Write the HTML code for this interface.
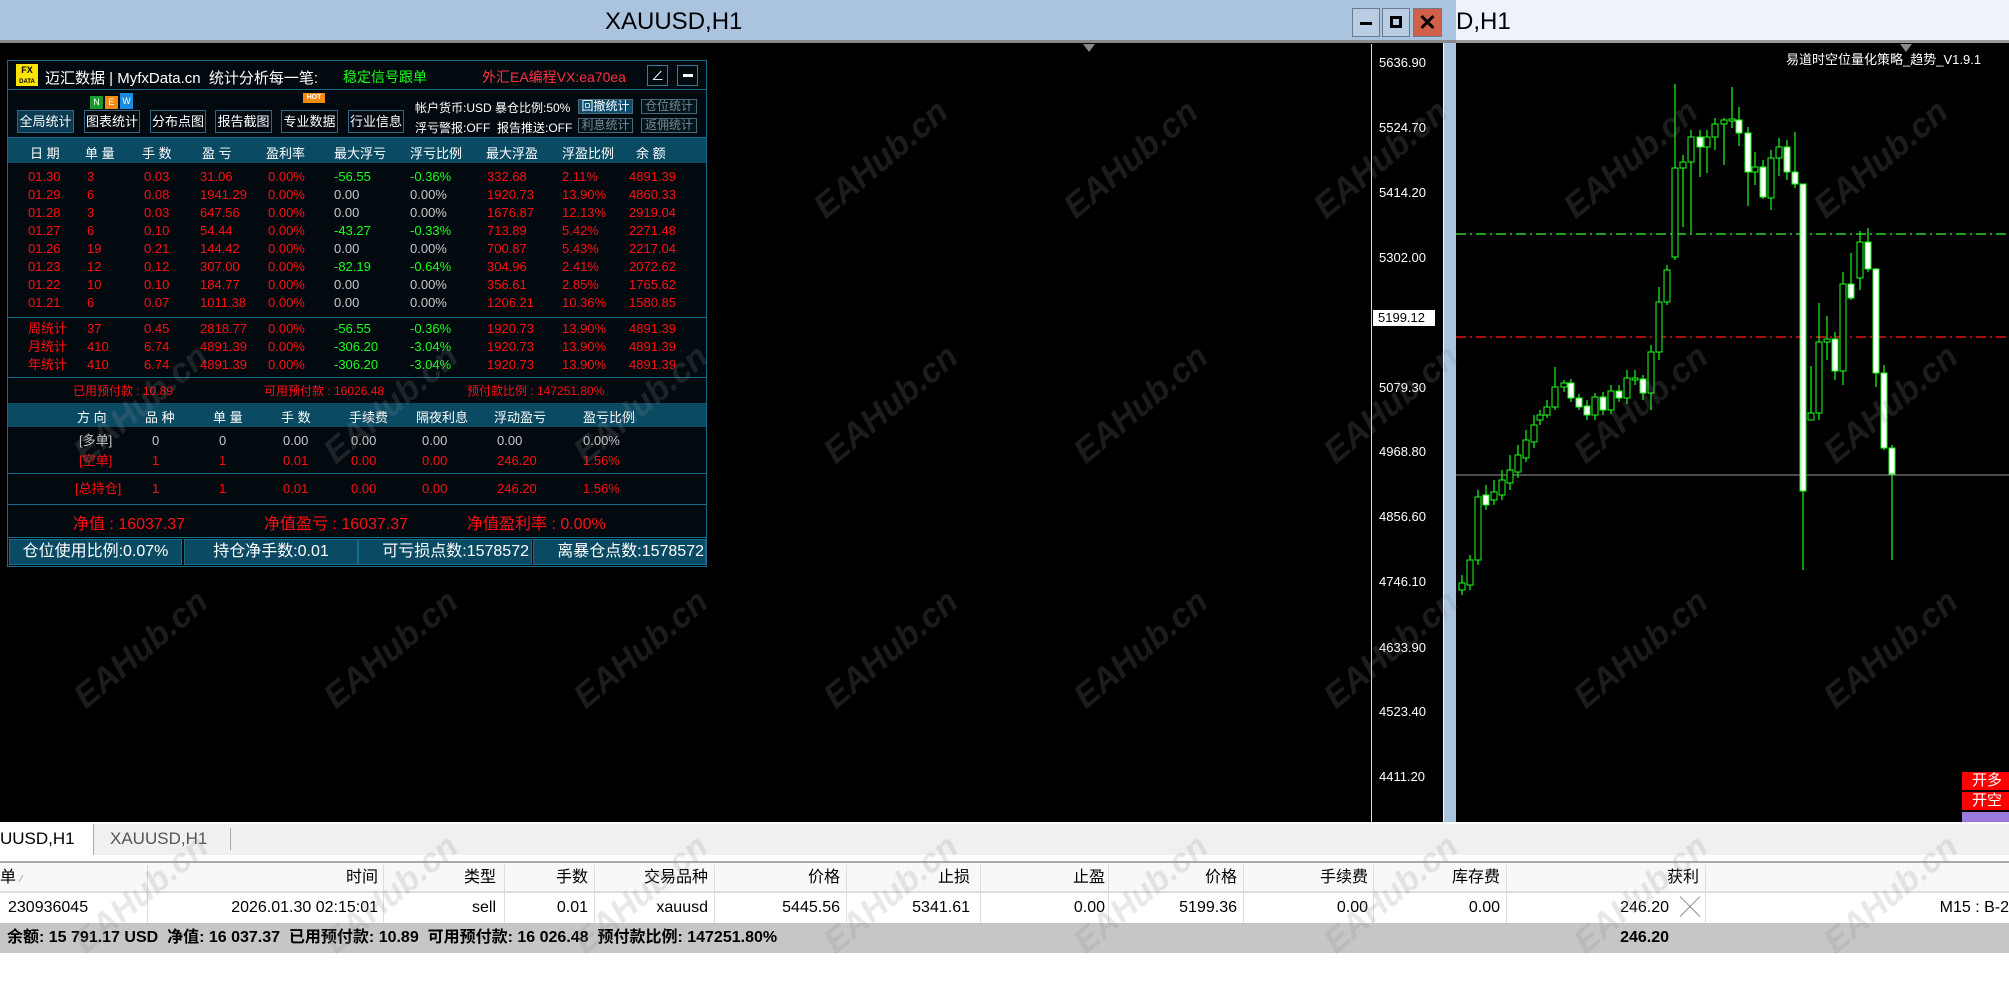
<!DOCTYPE html>
<html><head><meta charset="utf-8">
<style>
*{margin:0;padding:0;box-sizing:border-box}
body{width:2009px;height:981px;overflow:hidden;background:#fff;position:relative;font-family:"Liberation Sans","Noto Sans CJK SC",sans-serif}
.a{position:absolute;white-space:nowrap}
.p{font-size:13px;line-height:16px}
.r{color:#ff1010}.g{color:#1aff1a}.w{color:#fff}.gr{color:#c8c8c8}
.btn{position:absolute;border:1px solid #2a6a88;background:#020a10;color:#fff;font-size:13px;line-height:21px;text-align:center;overflow:hidden}
.sb{position:absolute;border:1px solid #4a6a7a;color:#7a8a94;font-size:12px;line-height:13px;text-align:center;background:#04141c;overflow:hidden}
.hd{color:#fff;font-size:13px}
.pr{position:absolute;left:1379px;color:#fff;font-size:13px;line-height:14px}
.th{position:absolute;top:863px;height:30px;font-size:16px;line-height:30px;color:#000;text-align:right}
.td{position:absolute;top:893px;height:30px;font-size:16px;line-height:30px;color:#000;text-align:right}
.wm{position:absolute;font-size:34px;font-weight:bold;font-style:italic;color:rgba(140,140,140,0.2);transform:rotate(-40deg);white-space:nowrap}
</style></head><body>
<div class="a" style="left:0;top:0;width:1456px;height:40px;background:#aac3de"></div>
<div class="a" style="left:0;top:40px;width:1456px;height:3px;background:#8a8a8a"></div>
<div class="a" style="left:1456px;top:0;width:553px;height:40px;background:#eef3fb"></div>
<div class="a" style="left:1456px;top:40px;width:553px;height:3px;background:#9a9a9a"></div>
<div class="a" style="left:605px;top:8px;font-size:24px;color:#000">XAUUSD,H1</div>
<div class="a" style="left:1456px;top:8px;font-size:24px;color:#000">D,H1</div>
<div class="a" style="left:1352px;top:8px;width:28px;height:29px;border:1px solid #6a7a8a;background:#b8cce4"><div class="a" style="left:7px;top:13px;width:12px;height:3px;background:#000"></div></div>
<div class="a" style="left:1382px;top:8px;width:28px;height:29px;border:1px solid #6a7a8a;background:#b8cce4"><div class="a" style="left:7px;top:7px;width:12px;height:12px;border:3px solid #000"></div></div>
<div class="a" style="left:1413px;top:8px;width:29px;height:29px;border:1px solid #6a7a8a;background:#d0604a;color:#000;font-size:22px;font-weight:bold;text-align:center;line-height:28px">✕</div>
<div class="a" style="left:0;top:43px;width:1444px;height:779px;background:#000"></div>
<div class="a" style="left:1371px;top:44px;width:1px;height:778px;background:#ddd"></div>
<div class="a" style="left:1443px;top:43px;width:13px;height:779px;background:#aac3de;border-left:1px solid #fff"></div>
<div class="a" style="left:1456px;top:43px;width:553px;height:779px;background:#000"></div>
<div class="a" style="left:1083px;top:44px;width:0;height:0;border-left:6px solid transparent;border-right:6px solid transparent;border-top:8px solid #888"></div>
<div class="a" style="left:1900px;top:44px;width:0;height:0;border-left:6px solid transparent;border-right:6px solid transparent;border-top:8px solid #888"></div>
<div class="pr" style="top:56px">5636.90</div>
<div class="pr" style="top:121px">5524.70</div>
<div class="pr" style="top:186px">5414.20</div>
<div class="pr" style="top:251px">5302.00</div>
<div class="a" style="left:1373px;top:310px;width:62px;height:16px;background:#fff;color:#000;font-size:13px;line-height:16px;padding-left:5px">5199.12</div>
<div class="pr" style="top:381px">5079.30</div>
<div class="pr" style="top:445px">4968.80</div>
<div class="pr" style="top:510px">4856.60</div>
<div class="pr" style="top:575px">4746.10</div>
<div class="pr" style="top:641px">4633.90</div>
<div class="pr" style="top:705px">4523.40</div>
<div class="pr" style="top:770px">4411.20</div>
<div class="a" style="left:1786px;top:49px;color:#fff;font-size:13px">易道时空位量化策略_趋势_V1.9.1</div>
<svg class="a" style="left:0;top:0" width="2009" height="822" id="cs">
<line x1="1456" y1="234" x2="2009" y2="234" stroke="#2ad42a" stroke-width="1.5" stroke-dasharray="10,4,2,4"/>
<line x1="1456" y1="337" x2="2009" y2="337" stroke="#e01010" stroke-width="1.5" stroke-dasharray="10,4,2,4"/>
<line x1="1456" y1="475" x2="2009" y2="475" stroke="#999" stroke-width="1"/>
</svg>
<div class="a" style="left:1962px;top:772px;width:47px;height:18px;background:#f00;color:#fff;font-size:15px;line-height:18px;padding-left:10px">开多</div>
<div class="a" style="left:1962px;top:792px;width:47px;height:18px;background:#f00;color:#fff;font-size:15px;line-height:18px;padding-left:10px">开空</div>
<div class="a" style="left:1962px;top:812px;width:47px;height:10px;background:#9a7ae0;overflow:hidden"></div>
<div class="a" style="left:7px;top:60px;width:700px;height:507px;background:#020a10;border:1px solid #1a6a8a"></div>
<div class="a" style="left:7px;top:89px;width:700px;height:1px;background:#1a6a8a"></div>
<div class="a" style="left:16px;top:64px;width:22px;height:22px;background:#ffe400;color:#000;font-size:9px;font-weight:bold;line-height:10px;text-align:center;padding-top:1px">FX<br><span style="font-size:6px">DATA</span></div>
<div class="a w" style="left:45px;top:67px;font-size:15px">迈汇数据 | MyfxData.cn &nbsp;统计分析每一笔:</div>
<div class="a g" style="left:343px;top:67px;font-size:14px">稳定信号跟单</div>
<div class="a r" style="left:482px;top:67px;font-size:14px;color:#ff3040">外汇EA编程VX:ea70ea</div>
<div class="a" style="left:647px;top:65px;width:21px;height:21px;border:1px solid #3a7a9a;color:#fff;font-size:13px;text-align:center;line-height:19px">∠</div>
<div class="a" style="left:677px;top:65px;width:21px;height:21px;border:1px solid #3a7a9a"><div class="a" style="left:5px;top:8px;width:10px;height:3px;background:#fff"></div></div>
<div class="btn" style="left:17px;top:110px;width:57px;height:23px;background:#0a3b52">全局统计</div>
<div class="btn" style="left:84px;top:110px;width:56px;height:23px">图表统计</div>
<div class="btn" style="left:150px;top:110px;width:56px;height:23px">分布点图</div>
<div class="btn" style="left:215px;top:110px;width:57px;height:23px">报告截图</div>
<div class="btn" style="left:281px;top:110px;width:57px;height:23px">专业数据</div>
<div class="btn" style="left:348px;top:110px;width:56px;height:23px">行业信息</div>
<div class="a" style="left:90px;top:96px;width:13px;height:13px;background:#1a9a2a;color:#fff;font-size:9px;text-align:center;line-height:13px">N</div>
<div class="a" style="left:105px;top:96px;width:13px;height:13px;background:#f08a10;color:#fff;font-size:9px;text-align:center;line-height:13px">E</div>
<div class="a" style="left:120px;top:93px;width:13px;height:16px;background:#1a8ae0;color:#fff;font-size:9px;text-align:center;line-height:16px">W</div>
<div class="a" style="left:303px;top:93px;width:22px;height:10px;background:#f08a10;color:#fff;font-size:7px;text-align:center;line-height:10px;font-weight:bold">HOT</div>
<div class="a w" style="left:415px;top:99px;font-size:12px">帐户货币:USD 暴仓比例:50%</div>
<div class="a w" style="left:415px;top:119px;font-size:12px">浮亏警报:OFF &nbsp;报告推送:OFF</div>
<div class="sb" style="left:578px;top:99px;width:55px;height:15px;background:#0d4e6e;color:#fff">回撤统计</div>
<div class="sb" style="left:641px;top:99px;width:56px;height:15px">仓位统计</div>
<div class="sb" style="left:578px;top:118px;width:55px;height:15px">利息统计</div>
<div class="sb" style="left:641px;top:118px;width:56px;height:15px">返佣统计</div>
<div class="a" style="left:8px;top:137px;width:698px;height:26px;background:#0a4a63;border-top:1px solid #1a6a8a"></div>
<div class="a hd" style="left:30px;top:143px">日 期</div><div class="a hd" style="left:85px;top:143px">单 量</div><div class="a hd" style="left:142px;top:143px">手 数</div><div class="a hd" style="left:202px;top:143px">盈 亏</div><div class="a hd" style="left:266px;top:143px">盈利率</div><div class="a hd" style="left:334px;top:143px">最大浮亏</div><div class="a hd" style="left:410px;top:143px">浮亏比例</div><div class="a hd" style="left:486px;top:143px">最大浮盈</div><div class="a hd" style="left:562px;top:143px">浮盈比例</div><div class="a hd" style="left:636px;top:143px">余 额</div>
<div id="rows"></div>
<div class="a" style="left:8px;top:317px;width:698px;height:1px;background:#1a6a8a"></div>
<div class="a" style="left:8px;top:377px;width:698px;height:1px;background:#1a6a8a"></div>
<div class="a r p" style="left:73px;top:383px;font-size:12px">已用预付款 : 10.89</div>
<div class="a r p" style="left:264px;top:383px;font-size:12px">可用预付款 : 16026.48</div>
<div class="a r p" style="left:467px;top:383px;font-size:12px">预付款比例 : 147251.80%</div>
<div class="a" style="left:8px;top:403px;width:698px;height:24px;background:#0a4a63"></div>
<div class="a hd" style="left:77px;top:407px">方 向</div><div class="a hd" style="left:145px;top:407px">品 种</div><div class="a hd" style="left:213px;top:407px">单 量</div><div class="a hd" style="left:281px;top:407px">手 数</div><div class="a hd" style="left:349px;top:407px">手续费</div><div class="a hd" style="left:416px;top:407px">隔夜利息</div><div class="a hd" style="left:494px;top:407px">浮动盈亏</div><div class="a hd" style="left:583px;top:407px">盈亏比例</div>
<div id="rows2"></div>
<div class="a" style="left:8px;top:473px;width:698px;height:1px;background:#1a6a8a"></div>
<div class="a" style="left:8px;top:504px;width:698px;height:1px;background:#1a6a8a"></div>
<div class="a r" style="left:73px;top:510px;font-size:16px">净值 : 16037.37</div>
<div class="a r" style="left:264px;top:510px;font-size:16px">净值盈亏 : 16037.37</div>
<div class="a r" style="left:467px;top:510px;font-size:16px">净值盈利率 : 0.00%</div>
<div class="a" style="left:8px;top:537px;width:698px;height:1px;background:#1a6a8a"></div>
<div class="a" style="left:9px;top:539px;width:173px;height:26px;background:#0a4a63;border:1px solid #1a6a8a;color:#fff;font-size:16px;line-height:24px;text-align:center">仓位使用比例:0.07%</div>
<div class="a" style="left:184px;top:539px;width:174px;height:26px;background:#0a4a63;border:1px solid #1a6a8a;color:#fff;font-size:16px;line-height:24px;text-align:center">持仓净手数:0.01</div>
<div class="a" style="left:358px;top:539px;width:174px;height:26px;background:#0a4a63;border:1px solid #1a6a8a;color:#fff;font-size:16px;line-height:24px;text-align:right;padding-right:2px">可亏损点数:1578572</div>
<div class="a" style="left:533px;top:539px;width:173px;height:26px;background:#0a4a63;border:1px solid #1a6a8a;color:#fff;font-size:16px;line-height:24px;text-align:right;padding-right:1px">离暴仓点数:1578572</div>
<div class="a" style="left:0;top:822px;width:2009px;height:33px;background:#f0f0f0;border-top:2px solid #fff"></div>
<div class="a" style="left:0;top:824px;width:94px;height:31px;background:#fff;border-right:1px solid #aaa;font-size:17px;line-height:30px;color:#000">UUSD,H1</div>
<div class="a" style="left:110px;top:824px;font-size:17px;line-height:30px;color:#555">XAUUSD,H1</div>
<div class="a" style="left:230px;top:828px;width:1px;height:22px;background:#aaa"></div>
<div class="a" style="left:0;top:855px;width:2009px;height:8px;background:#fff;border-bottom:2px solid #aaa"></div>
<div class="a" style="left:0;top:863px;width:2009px;height:30px;background:#f8f8f8;border-bottom:2px solid #ddd"></div>
<div class="a" style="left:0;top:893px;width:2009px;height:30px;background:#fff"></div>
<div class="a" style="left:0;top:923px;width:2009px;height:30px;background:#c6c6c6"></div>
<div class="th" style="left:0;text-align:left">单 <span style="font-size:10px;color:#888">⁄</span></div>
<div class="th" style="left:0;width:378px">时间</div><div class="th" style="left:0;width:496px">类型</div><div class="th" style="left:0;width:588px">手数</div><div class="th" style="left:0;width:708px">交易品种</div><div class="th" style="left:0;width:840px">价格</div><div class="th" style="left:0;width:970px">止损</div><div class="th" style="left:0;width:1105px">止盈</div><div class="th" style="left:0;width:1237px">价格</div><div class="th" style="left:0;width:1368px">手续费</div><div class="th" style="left:0;width:1500px">库存费</div><div class="th" style="left:0;width:1699px">获利</div>
<div class="td" style="left:8px;text-align:left">230936045</div>
<div class="td" style="left:0;width:378px">2026.01.30 02:15:01</div><div class="td" style="left:0;width:496px">sell</div><div class="td" style="left:0;width:588px">0.01</div><div class="td" style="left:0;width:708px">xauusd</div><div class="td" style="left:0;width:840px">5445.56</div><div class="td" style="left:0;width:970px">5341.61</div><div class="td" style="left:0;width:1105px">0.00</div><div class="td" style="left:0;width:1237px">5199.36</div><div class="td" style="left:0;width:1368px">0.00</div><div class="td" style="left:0;width:1500px">0.00</div><div class="td" style="left:0;width:1669px">246.20</div>
<div class="td" style="left:1680px;color:#777;font-size:20px;text-align:left">╳</div>
<div class="td" style="left:1700px;width:309px;text-align:right">M15 : B-2</div>
<div id="seps"></div>
<div class="a" style="left:7px;top:923px;font-size:16px;line-height:30px;font-weight:bold;color:#000">余额: 15 791.17 USD &nbsp;净值: 16 037.37 &nbsp;已用预付款: 10.89 &nbsp;可用预付款: 16 026.48 &nbsp;预付款比例: 147251.80%</div>
<div class="a" style="left:1500px;top:923px;width:169px;text-align:right;font-size:16px;line-height:30px;font-weight:bold;color:#000">246.20</div>
<div id="wms"></div>
<script>
var R=[["01.30","3","0.03","31.06","0.00%","-56.55","-0.36%","332.68","2.11%","4891.39"],
["01.29","6","0.08","1941.29","0.00%","0.00","0.00%","1920.73","13.90%","4860.33"],
["01.28","3","0.03","647.56","0.00%","0.00","0.00%","1676.87","12.13%","2919.04"],
["01.27","6","0.10","54.44","0.00%","-43.27","-0.33%","713.89","5.42%","2271.48"],
["01.26","19","0.21","144.42","0.00%","0.00","0.00%","700.87","5.43%","2217.04"],
["01.23","12","0.12","307.00","0.00%","-82.19","-0.64%","304.96","2.41%","2072.62"],
["01.22","10","0.10","184.77","0.00%","0.00","0.00%","356.61","2.85%","1765.62"],
["01.21","6","0.07","1011.38","0.00%","0.00","0.00%","1206.21","10.36%","1580.85"]];
var S=[["周统计","37","0.45","2818.77","0.00%","-56.55","-0.36%","1920.73","13.90%","4891.39"],
["月统计","410","6.74","4891.39","0.00%","-306.20","-3.04%","1920.73","13.90%","4891.39"],
["年统计","410","6.74","4891.39","0.00%","-306.20","-3.04%","1920.73","13.90%","4891.39"]];
var X=[28,87,144,200,268,334,410,487,562,629],h="";
function row(d,y){for(var i=0;i<10;i++){var c="r";if(i==5||i==6){c=d[i].charAt(0)=="-"?"g":"gr";}h+='<div class="a p '+c+'" style="left:'+X[i]+'px;top:'+y+'px">'+d[i]+'</div>';}}
R.forEach(function(d,k){row(d,169+k*18)});S.forEach(function(d,k){row(d,321+k*18)});
document.getElementById("rows").innerHTML=h;
var X2=[79,152,219,283,351,422,497,583],h2="";
[[["[多单]","0","0","0.00","0.00","0.00","0.00","0.00%"],433,"gr"],[["[空单]","1","1","0.01","0.00","0.00","246.20","1.56%"],453,"r"],[["[总持仓]","1","1","0.01","0.00","0.00","246.20","1.56%"],481,"r"]].forEach(function(q){for(var i=0;i<8;i++)h2+='<div class="a p '+q[2]+'" style="left:'+(X2[i]-(i==0&&q[0][0].length>4?4:0))+'px;top:'+q[1]+'px">'+q[0][i]+'</div>';});
document.getElementById("rows2").innerHTML=h2;
var sp=[147,383,504,594,714,846,980,1108,1243,1373,1506,1705],h3="";
sp.forEach(function(x){h3+='<div class="a" style="left:'+x+'px;top:865px;width:1px;height:58px;background:#ddd"></div>';});
document.getElementById("seps").innerHTML=h3;
var C=[[1462,583,590,575,595,0],[1470,560,585,555,590,0],[1478,497,560,490,565,0],[1486,495,505,485,510,1],[1494,492,500,480,505,0],[1502,480,495,470,500,0],[1510,470,483,455,490,0],[1518,455,472,445,478,0],[1526,440,458,430,462,0],[1534,425,442,415,448,0],
[1540,415,420,410,425,0],[1547,407,415,400,418,0],[1555,387,407,367,410,0],[1564,383,387,380,392,0],[1571,383,398,379,402,1],[1579,398,407,394,410,1],[1587,406,415,400,420,1],[1595,397,415,393,420,0],[1603,397,410,392,415,1],[1611,391,410,385,414,0],[1619,391,398,385,402,1],[1627,378,398,370,404,0],[1635,378,380,370,385,0],[1643,379,393,375,400,1],[1651,352,393,345,410,0],[1659,302,352,287,360,0],[1667,270,302,265,305,0],[1675,168,257,84,260,0],[1683,162,168,155,227,0],[1691,137,162,130,233,0],[1700,137,147,130,177,1],[1707,137,147,130,173,0],[1715,124,137,118,150,0],[1724,120,124,118,165,0],[1732,119,121,87,128,0],[1739,120,133,107,146,1],[1748,133,172,127,206,1],[1755,167,172,152,185,0],[1763,167,197,160,199,1],[1771,158,198,150,210,0],[1779,147,158,138,176,0],[1787,147,172,140,180,1],[1795,172,184,132,188,1],[1803,184,491,184,570,1],[1811,413,420,366,420,0],[1819,342,413,303,420,0],[1827,339,342,316,360,0],[1835,339,371,332,380,1],[1843,284,371,272,385,0],[1851,284,298,253,300,1],[1860,242,278,231,290,0],[1868,242,269,228,272,1],[1876,269,373,268,387,1],[1884,373,448,365,450,1],[1892,448,474,445,560,1]];
var s="";C.forEach(function(c){s+='<line x1="'+c[0]+'" y1="'+c[3]+'" x2="'+c[0]+'" y2="'+c[4]+'" stroke="#1aff1a" stroke-width="1.2"/>';s+='<rect x="'+(c[0]-3)+'" y="'+c[1]+'" width="6" height="'+Math.max(1,c[2]-c[1])+'" fill="'+(c[5]?"#fff":"#000")+'" stroke="#1aff1a" stroke-width="1"/>';});
document.getElementById("cs").insertAdjacentHTML("beforeend",s);
var w="";[160,405,650,895].forEach(function(y,ri){for(var x=(ri==0?800:60);x<2009;x+=250)w+='<div class="wm" style="left:'+x+'px;top:'+(y-20)+'px">EAHub.cn</div>';});
document.getElementById("wms").innerHTML=w;
</script>
</body></html>
